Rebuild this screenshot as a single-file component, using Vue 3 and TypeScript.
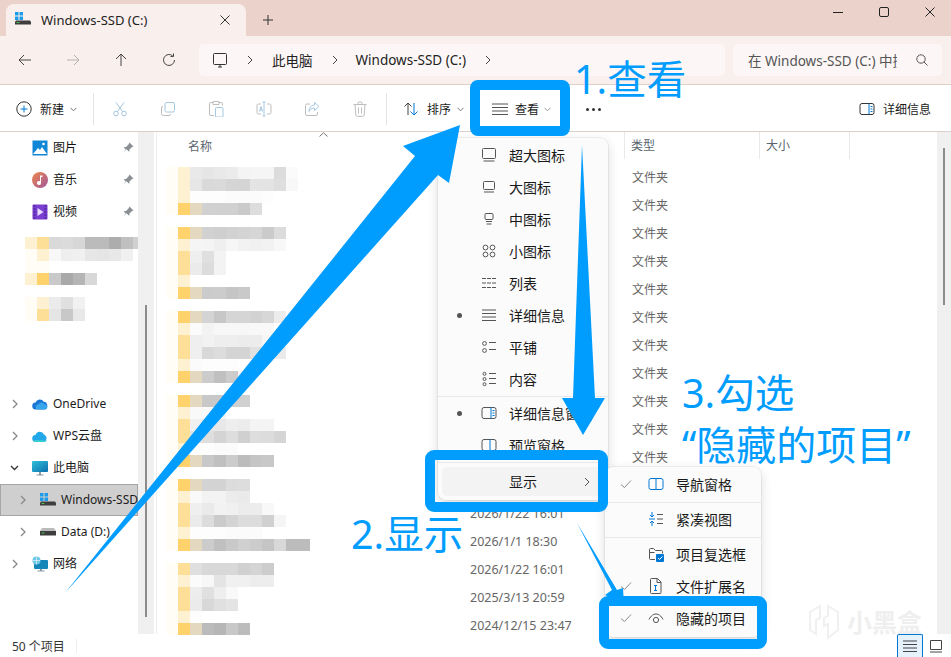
<script setup lang="ts">
interface Ico { d: string; b?: string; f?: string }
interface Item extends Ico { label: string; dot?: boolean; check?: boolean; sepAfter?: boolean }

const paneOuter = 'M3 2.5h10a2 2 0 0 1 2 2v7a2 2 0 0 1-2 2H3a2 2 0 0 1-2-2v-7a2 2 0 0 1 2-2z'
const circle = (x: number, y: number, r: number) =>
  `M${x - r} ${y}a${r} ${r} 0 1 0 ${2 * r} 0a${r} ${r} 0 1 0 ${-2 * r} 0z`

const menu: Item[] = [
  { label: '超大图标', d: 'M2.5 1.5h11a1 1 0 0 1 1 1v8a1 1 0 0 1-1 1h-11a1 1 0 0 1-1-1v-8a1 1 0 0 1 1-1zM2.5 14h11' },
  { label: '大图标', d: 'M3.5 2.5h9a1 1 0 0 1 1 1v6a1 1 0 0 1-1 1h-9a1 1 0 0 1-1-1v-6a1 1 0 0 1 1-1zM3 13h10' },
  { label: '中图标', d: 'M5 2.5h6a1 1 0 0 1 1 1v4a1 1 0 0 1-1 1H5a1 1 0 0 1-1-1v-4a1 1 0 0 1 1-1zM5 10.5h6M5.5 13h5' },
  { label: '小图标', d: circle(4.5, 4.5, 2.4) + circle(11.5, 4.5, 2.4) + circle(4.5, 11.5, 2.4) + circle(11.5, 11.5, 2.4) },
  { label: '列表', d: 'M1 3.5h4M1 8h4M1 12.5h4M6 3.5h4M6 8h4M6 12.5h4M11 3.5h4M11 8h4M11 12.5h4' },
  { label: '详细信息', dot: true, d: 'M1 3h14M1 6.5h14M1 10h14M1 13.5h14' },
  { label: '平铺', d: circle(3.5, 4.5, 1.9) + circle(3.5, 11.5, 1.9) + 'M8 3.5h7M8 10.5h7' },
  { label: '内容', sepAfter: true, d: circle(3.5, 2.8, 1.5) + circle(3.5, 8, 1.5) + circle(3.5, 13.2, 1.5) + 'M8 2.5h7M8 7.5h7M8 12.5h7' },
  { label: '详细信息窗格', dot: true, d: paneOuter, b: 'M10 2.5v11M11.5 5.5h2M11.5 8h2M11.5 10.5h2' },
  { label: '预览窗格', sepAfter: true, d: paneOuter, b: 'M9 2.5v11' },
]

const sub: Item[] = [
  { label: '导航窗格', check: true, sepAfter: true, d: '', b: paneOuter + 'M8 2.5v11' },
  { label: '紧凑视图', sepAfter: true, d: 'M9 3.5h6M9 8h6M9 12.5h6', b: 'M4 1v5M2 4l2 2 2-2M1 8h6M4 15v-5M2 12l2-2 2 2' },
  { label: '项目复选框', d: 'M7 13.5H2.5a1 1 0 0 1-1-1v-9a1 1 0 0 1 1-1h3l2 2h6a1 1 0 0 1 1 1v2M1.5 6.5h5', f: 'M9 8h6a1 1 0 0 1 1 1v6a1 1 0 0 1-1 1H9a1 1 0 0 1-1-1V9a1 1 0 0 1 1-1z' },
  { label: '文件扩展名', check: true, d: 'M3.5 .5h6l3.500 3.500V14.500a1 1 0 0 1-1 1h-8.500a1 1 0 0 1-1-1V1.500a1 1 0 0 1 1-1zM9 .5v4h4', b: 'M6 7.500h3M7.500 7.500v5M6 12.500h3' },
  { label: '隐藏的项目', check: true, d: 'M1 9.500C3 5.500 5.500 4 8 4s5 1.500 7 5.500' + circle(8, 10, 2.6) },
]

const tools: Ico[] = [
  { d: '', b: 'M4 1.500l6.500 9M12 1.500l-6.500 9' + circle(4, 12.500, 2.300) + circle(12, 12.500, 2.300) },
  { d: 'M3 5.500a1.500 1.500 0 0 0-1.500 1.500v5.500a2 2 0 0 0 2 2H9a1.500 1.500 0 0 0 1.500-1.500', b: 'M6.500 1.500h6.500a1.500 1.500 0 0 1 1.500 1.500v6.500a1.500 1.500 0 0 1-1.500 1.500H6.500a1.500 1.500 0 0 1-1.500-1.500V3a1.500 1.500 0 0 1 1.500-1.500z' },
  { d: 'M6 14.500H3a1.500 1.500 0 0 1-1.500-1.500V3A1.500 1.500 0 0 1 3 1.500h2M11 1.500h2A1.500 1.500 0 0 1 14.500 3v1.500M5 .5h6v3H5z', b: 'M8.500 6.500H14a1 1 0 0 1 1 1V15a1 1 0 0 1-1 1H8.500a1 1 0 0 1-1-1V7.500a1 1 0 0 1 1-1z' },
  { d: 'M5 3H2.500a1.500 1.500 0 0 0-1.500 1.500v7A1.500 1.500 0 0 0 2.500 13H5M11 3h2.500A1.500 1.500 0 0 1 15 4.500v7a1.500 1.500 0 0 1-1.500 1.500H11', b: 'M8 1v14M6.500 1h3M6.500 15h3M3.500 10.500L5 5.500l1.500 5M4 9h2' },
  { d: 'M6 3H3a1.500 1.500 0 0 0-1.500 1.500V13A1.500 1.500 0 0 0 3 14.500h9a1.500 1.500 0 0 0 1.500-1.500v-2', b: 'M10.500 1.500l4.500 4-4.500 4V7C8 7 6 8 5 10.500 5 6.500 7 4.200 10.500 4z' },
  { d: 'M1.500 3.500h13M6 3.500V2a1 1 0 0 1 1-1h2a1 1 0 0 1 1 1v1.500M3 3.500l.8 10.500a1.500 1.500 0 0 0 1.500 1.300h5.400a1.500 1.500 0 0 0 1.500-1.300L13 3.500M6.500 6.500v6M9.500 6.500v6' },
]

const mosaicNames = [
  'p c e9 e6 e9 eb f4 f5 f5 dc fb', 'p c e6 d9 da d5 d4 e4 e3 de f8', 'p c fd fd fd fb fb fb fd',
  'p y t d1 d0 d0 ca dd', '', 'p y t d1 cf d2 d4 d6 cb dc', 'p c f5 f4 ef f6 f2 f0 f2 f8',
  'p o ef df f3', 'p o eb dc f3', 'p c', 'p y t cb cc c5 c9', '',
  'p y t d4 c7 d5 d5 d2 d7 ec', 'p c fb f3 f7 f7 f7 f8 f8', 'p o ef f2 ee ee ec ec f6',
  'p o ef d8 dc d4 d4 e0 e0 ea', 'p c fb fd fd fd', 'p y t cc c0 cc f5', '',
  'p y t c8 c8 d0 d0', 'p c f9 f9 f5', 'p o f0 e8 e8 ee ec f4 f4', 'p o e2 de d4 dd d0 dd dc d5',
  'p c fd fd fb fb', 'p y t c8 c0 cc bc c5 c8', '',
  'p y t d3 d3 dc dd', 'p c f9 f3 f3 ec ea', 'p o ef ea f2 f0 ec ec f8',
  'p o eb dc cb d4 dc dc d0 f5', 'p c fd fd fd fb fb fb', 'p y t cc c0 c9 d0 cc c5 d8 bc bc', '',
  'p o df d8 d8 d8 d0 d4 cc', 'p c fb f7 e4 f0 f0 ed ed', 'p o ed e0 ee f9', 'p o eb d8 e0 e4',
  'p c fd', 'p y t bb b6 c8 bc',
]
const mosaicSide = [
  'c o d9 db d7 bb bb ad c0 d0', 'p c f8 ee f0 e7 e5 e8 f0', 'p p', 'c y c9 a9 b5 d8', '',
  'p c eb e0 f1', 'p o e5 c8 e8',
]
const tokens: Record<string, string> = {
  p: '#fffdf6', c: '#fef1d2', y: '#ffd26c', o: '#fedf98', t: '#e4d9c0',
}
const toCells = (rows: string[]) =>
  rows.map((r) => (r ? r.split(' ').map((k) => tokens[k] ?? `#${k}${k}${k}`) : []))
const nameCells = toCells(mosaicNames)
const sideCells = toCells(mosaicSide)

const dates = [...Array(12).fill(''), '2026/1/22 16:01', '2026/1/1 18:30', '2026/1/22 16:01', '2025/3/13 20:59', '2024/12/15 23:47']
const types = Array(11).fill('文件夹')
</script>

<template>
  <div class="win">
    <!-- title bar -->
    <div class="title">
      <div class="tab">
        <svg class="drive" width="16" height="14" viewBox="0 0 16 14">
          <path fill="#1e9be8" d="M0 0h3.500v3.500H0zM4.500 0H8v3.500H4.500zM0 4.500h3.500V8H0zM4.500 4.500H8V8H4.500z" />
          <path fill="#3d3d3d" d="M0 10l1-1.500h14l1 1.500v2.500H0z" />
          <path fill="#4fc04f" d="M1.500 10h3v1h-3z" />
        </svg>
        <span class="tab-text">Windows-SSD (C:)</span>
        <svg class="tab-x" width="10" height="10" viewBox="0 0 10 10"><path d="M.5.5l9 9M9.500.5l-9 9" stroke="#333" fill="none" /></svg>
      </div>
      <svg class="plus" width="10" height="10" viewBox="0 0 10 10"><path d="M5 0v10M0 5h10" stroke="#333" fill="none" /></svg>
      <div class="wctl">
        <svg width="10" height="10" viewBox="0 0 10 10"><path d="M0 5.500h10" stroke="#222" /></svg>
        <svg width="10" height="10" viewBox="0 0 10 10"><rect x=".5" y=".5" width="9" height="9" rx="1.500" stroke="#222" fill="none" /></svg>
        <svg width="10" height="10" viewBox="0 0 10 10"><path d="M.5.5l9 9M9.500.5l-9 9" stroke="#222" fill="none" /></svg>
      </div>
    </div>

    <!-- address bar -->
    <div class="addr">
      <svg class="nav" width="16" height="16" viewBox="0 0 16 16"><path d="M14 8H2M7 3L2 8l5 5" stroke="#444" fill="none" /></svg>
      <svg class="nav" width="16" height="16" viewBox="0 0 16 16"><path d="M2 8h12M9 3l5 5-5 5" stroke="#b5b0ae" fill="none" /></svg>
      <svg class="nav" width="16" height="16" viewBox="0 0 16 16"><path d="M8 14V2M3 7l5-5 5 5" stroke="#444" fill="none" /></svg>
      <svg class="nav" width="16" height="16" viewBox="0 0 16 16"><path d="M13.500 8A5.500 5.500 0 1 1 11.800 4M12.500 1.500V4.500H9.500" stroke="#444" fill="none" /></svg>
      <div class="crumbs">
        <svg class="pc" width="16" height="16" viewBox="0 0 16 16"><path d="M2.500 1.500h11a1 1 0 0 1 1 1v9a1 1 0 0 1-1 1h-11a1 1 0 0 1-1-1v-9a1 1 0 0 1 1-1zM6 15h4M8 12.500V15" stroke="#333" fill="none" /></svg>
        <svg class="cr" width="6" height="10" viewBox="0 0 6 10"><path d="M1 1l4 4-4 4" stroke="#444" fill="none" /></svg>
        <span class="c1">此电脑</span>
        <svg class="cr" width="6" height="10" viewBox="0 0 6 10"><path d="M1 1l4 4-4 4" stroke="#444" fill="none" /></svg>
        <span class="c2">Windows-SSD (C:)</span>
        <svg class="cr" width="6" height="10" viewBox="0 0 6 10"><path d="M1 1l4 4-4 4" stroke="#444" fill="none" /></svg>
      </div>
      <div class="search">
        <span class="s-text">在 Windows-SSD (C:) 中搜</span>
        <svg width="12" height="12" viewBox="0 0 12 12"><path d="M5 .8a4.200 4.200 0 1 0 0 8.400a4.200 4.200 0 1 0 0-8.400zM8 8l3.500 3.500" stroke="#555" fill="none" /></svg>
      </div>
    </div>

    <!-- toolbar -->
    <div class="tools">
      <svg width="16" height="16" viewBox="0 0 16 16"><circle cx="8" cy="8" r="7.200" stroke="#333" fill="none" /><path d="M8 4.500v7M4.500 8h7" stroke="#0078d4" /></svg>
      <span class="t-label t-new">新建</span>
      <svg class="t-chev" width="7" height="5" viewBox="0 0 7 5"><path d="M.5.8l3 3 3-3" stroke="#777" fill="none" /></svg>
      <i class="t-sep s1"></i>
      <span v-for="(t, i) in tools" :key="i" class="t-btn">
        <svg width="16" height="16" viewBox="0 0 16 16">
          <path :d="t.d" stroke="#bdbdbd" fill="none" />
          <path v-if="t.b" :d="t.b" stroke="#a5c8e0" fill="none" />
        </svg>
      </span>
      <i class="t-sep s2"></i>
      <svg class="t-sort" width="16" height="16" viewBox="0 0 16 16"><path d="M5 14V2M1.500 5.500L5 2l3.500 3.500" stroke="#444" fill="none" /><path d="M11 2v12M7.500 10.500L11 14l3.500-3.500" stroke="#0078d4" fill="none" /></svg>
      <span class="t-label t-sorttxt">排序</span>
      <svg class="t-chev" width="7" height="5" viewBox="0 0 7 5"><path d="M.5.8l3 3 3-3" stroke="#777" fill="none" /></svg>
      <svg class="t-view" width="16" height="16" viewBox="0 0 16 16"><path d="M0 3h16M0 6.500h16M0 10h16M0 13.500h16" stroke="#555" /></svg>
      <span class="t-label t-viewtxt">查看</span>
      <svg class="t-chev v" width="7" height="5" viewBox="0 0 7 5"><path d="M.5.8l3 3 3-3" stroke="#999" fill="none" /></svg>
      <span class="dots"><i></i><i></i><i></i></span>
      <svg class="t-det" width="16" height="16" viewBox="0 0 16 16"><path :d="paneOuter" stroke="#333" fill="none" /><path d="M10 2.500v11M11.500 5.500h2M11.500 8h2M11.500 10.500h2" stroke="#0078d4" fill="none" /></svg>
      <span class="t-label t-dettxt">详细信息</span>
    </div>

    <!-- body -->
    <div class="body">
      <div class="side">
        <div class="row q">
          <svg width="16" height="16" viewBox="0 0 16 16"><rect width="15" height="15" x=".5" y=".5" fill="#0f86d6" /><path d="M1 14l5-6 2 2 2-3 5 7z" fill="#fff" /><circle cx="11.500" cy="4" r="1.300" fill="#fff" /></svg>
          <span>图片</span>
          <svg class="pin" width="12" height="12" viewBox="0 0 12 12"><path fill="#8a8f94" d="M7.500.5l4 4-1.500.5-2.500 2.500-.3 2.300-1-.8-1.700-1.700L1 11l2.700-3.500-1.200-1.300-.8-1 2.300-.3L6.500 2.500z" /></svg>
        </div>
        <div class="row q">
          <svg width="16" height="16" viewBox="0 0 16 16"><defs><linearGradient id="mg" x1="0" y1="0" x2="1" y2="1"><stop offset="0" stop-color="#f0884e" /><stop offset="1" stop-color="#a0569c" /></linearGradient></defs><circle cx="8" cy="8" r="8" fill="url(#mg)" /><path d="M8 3.500h2.500v1.500H9v6a2 2 0 1 1-1-1.700z" fill="#fff" /></svg>
          <span>音乐</span>
          <svg class="pin" width="12" height="12" viewBox="0 0 12 12"><path fill="#8a8f94" d="M7.500.5l4 4-1.500.5-2.500 2.500-.3 2.300-1-.8-1.700-1.700L1 11l2.700-3.500-1.200-1.300-.8-1 2.300-.3L6.500 2.500z" /></svg>
        </div>
        <div class="row q">
          <svg width="16" height="16" viewBox="0 0 16 16"><rect x=".5" y=".5" width="15" height="15" rx="1" fill="#7a3fd0" /><path d="M5.500 4l6 4-6 4z" fill="#e9dcff" /><path d="M1.500 2h2M1.500 5h2M1.500 8h2M1.500 11h2M1.500 14h2M12.500 2h2M12.500 5h2M12.500 8h2M12.500 11h2M12.500 14h2" stroke="#3d1a80" /></svg>
          <span>视频</span>
          <svg class="pin" width="12" height="12" viewBox="0 0 12 12"><path fill="#8a8f94" d="M7.500.5l4 4-1.500.5-2.500 2.500-.3 2.300-1-.8-1.700-1.700L1 11l2.700-3.500-1.200-1.300-.8-1 2.300-.3L6.500 2.500z" /></svg>
        </div>

        <div class="side-mosaic">
          <div v-for="(r, i) in sideCells" :key="i" class="m-row">
            <i v-for="(c, j) in r" :key="j" :style="{ background: c }"></i>
          </div>
        </div>

        <div class="row top">
          <svg class="chev" width="6" height="10" viewBox="0 0 6 10"><path d="M1 1l4 4-4 4" stroke="#888" stroke-width="1.300" fill="none" /></svg>
          <svg width="16" height="12" viewBox="0 0 16 12"><path d="M4 11.500a3.500 3.500 0 0 1-.5-7 4.500 4.500 0 0 1 8.200-.8A4 4 0 0 1 12.500 11.500z" fill="#1a76d2" /><path d="M6 11.500a2.500 2.500 0 0 1 .5-5 3.500 3.500 0 0 1 6.200 0 2.500 2.500 0 0 1 .3 5z" fill="#38a5ec" /></svg>
          <span>OneDrive</span>
        </div>
        <div class="row">
          <svg class="chev" width="6" height="10" viewBox="0 0 6 10"><path d="M1 1l4 4-4 4" stroke="#888" stroke-width="1.300" fill="none" /></svg>
          <svg width="16" height="14" viewBox="0 0 16 14"><path d="M4 13a3.500 3.500 0 0 1-.5-7 4.500 4.500 0 0 1 8.500-.5A4 4 0 0 1 12 13z" fill="#22a7e8" /><path d="M1.500 11a3 3 0 0 0 2.500 2h8a4 4 0 0 0 3-1.500z" fill="#3bd0d0" /></svg>
          <span>WPS云盘</span>
        </div>
        <div class="row">
          <svg class="chev" width="9" height="6" viewBox="0 0 9 6"><path d="M1 1l3.500 3.500L8 1" stroke="#333" stroke-width="1.300" fill="none" /></svg>
          <svg width="16" height="16" viewBox="0 0 16 16"><defs><linearGradient id="pcg" x1="0" y1="0" x2="1" y2="1"><stop offset="0" stop-color="#2fc0d8" /><stop offset="1" stop-color="#0d6fb0" /></linearGradient></defs><rect y="1" width="16" height="11" rx="1" fill="url(#pcg)" /><path d="M7 12h2v2.500H7zM4.500 14.500h7v1h-7z" fill="#8d99a3" /></svg>
          <span>此电脑</span>
        </div>
        <div class="row sub sel">
          <svg class="chev" width="6" height="10" viewBox="0 0 6 10"><path d="M1 1l4 4-4 4" stroke="#888" stroke-width="1.300" fill="none" /></svg>
          <svg width="16" height="14" viewBox="0 0 16 14">
            <path fill="#1e9be8" d="M0 0h3.500v3.500H0zM4.500 0H8v3.500H4.500zM0 4.500h3.500V8H0zM4.500 4.500H8V8H4.500z" />
            <path fill="#3d3d3d" d="M0 10l1-1.500h14l1 1.500v2.500H0z" />
            <path fill="#4fc04f" d="M1.500 10h3v1h-3z" />
          </svg>
          <span>Windows-SSD (C:)</span>
        </div>
        <div class="row sub">
          <svg class="chev" width="6" height="10" viewBox="0 0 6 10"><path d="M1 1l4 4-4 4" stroke="#888" stroke-width="1.300" fill="none" /></svg>
          <svg width="16" height="8" viewBox="0 0 16 8"><path fill="#bbb" d="M2 0h12l2 3H0z" /><path fill="#3d3d3d" d="M0 3h16v4.500H0z" /><path fill="#4fc04f" d="M1.500 4.500h3v1h-3z" /></svg>
          <span>Data (D:)</span>
        </div>
        <div class="row">
          <svg class="chev" width="6" height="10" viewBox="0 0 6 10"><path d="M1 1l4 4-4 4" stroke="#888" stroke-width="1.300" fill="none" /></svg>
          <svg width="16" height="16" viewBox="0 0 16 16"><rect x="2" y="4" width="14" height="9" rx="1" fill="#1487b8" /><path d="M8 13h2v1.500H8zM5.500 14.500h7v1h-7z" fill="#8d99a3" /><circle cx="4.500" cy="4.500" r="4" fill="#6fc7e8" /><path d="M1 4.500h7M4.500 .5v8" stroke="#e4f5fb" stroke-width=".7" /></svg>
          <span>网络</span>
        </div>
      </div>

      <div class="sbar"><i class="thumb-l"></i></div>

      <div class="pane">
        <div class="head">
          <span class="h-name">名称</span>
          <svg class="h-up" width="9" height="5" viewBox="0 0 9 5"><path d="M.5 4.500L4.500.8l4 3.700" stroke="#777" fill="none" /></svg>
          <span class="h-cell h-date"></span>
          <span class="h-cell h-type">类型</span>
          <span class="h-cell h-size">大小</span>
        </div>
        <div class="list">
          <div class="col-name">
            <div v-for="(r, i) in nameCells" :key="i" class="m-row">
              <i v-for="(c, j) in r" :key="j" :style="{ background: c }"></i>
            </div>
          </div>
          <div class="col-date">
            <div v-for="(d, i) in dates" :key="i" class="cell">{{ d }}</div>
          </div>
          <div class="col-type">
            <div v-for="(t, i) in types" :key="i" class="cell">{{ t }}</div>
          </div>
        </div>
      </div>

      <div class="vbar"><i class="thumb-r"></i></div>
    </div>

    <!-- status bar -->
    <div class="status">
      <span class="count">50 个项目</span>
      <i class="st-sep"></i>
      <span class="grow"></span>
      <span class="vbtn on"><svg width="16" height="14" viewBox="0 0 16 14"><path d="M1 2h14M1 5.500h14M1 9h14M1 12.500h14" stroke="#444" /></svg></span>
      <span class="vbtn"><svg width="14" height="14" viewBox="0 0 14 14"><path d="M1.500 1.500h11v9h-11zM1 13h12" stroke="#444" fill="none" /></svg></span>
    </div>

    <!-- watermark -->
    <div class="wm">
      <svg width="32" height="36" viewBox="0 0 32 36"><path d="M12 2L2 8v18l6 4V16l4-2zM20 2l10 6v18l-10 8V20l-4 2v-8l4-2z" fill="none" stroke="#f0f0f0" stroke-width="2" /></svg>
      <span>小黑盒</span>
    </div>

    <!-- view menu -->
    <div class="menu">
      <template v-for="m in menu" :key="m.label">
        <div class="mi">
          <span class="mark"><i v-if="m.dot" class="dot"></i></span>
          <svg width="16" height="16" viewBox="0 0 16 16">
            <path :d="m.d" stroke="#555" fill="none" />
            <path v-if="m.b" :d="m.b" stroke="#0078d4" fill="none" />
          </svg>
          <span class="ml">{{ m.label }}</span>
        </div>
        <div v-if="m.sepAfter" class="msep"></div>
      </template>
      <div class="mi hot">
        <span class="mark"></span>
        <span class="ic-gap"></span>
        <span class="ml">显示</span>
        <svg class="mchev" width="6" height="10" viewBox="0 0 6 10"><path d="M1 1l4 4-4 4" stroke="#555" fill="none" /></svg>
      </div>
    </div>

    <!-- show submenu -->
    <div class="submenu">
      <template v-for="m in sub" :key="m.label">
        <div class="mi si">
          <span class="mark">
            <svg v-if="m.check" width="12" height="10" viewBox="0 0 12 10"><path d="M1 5.500l3.500 3L11 1.500" stroke="#8a8a8a" fill="none" /></svg>
          </span>
          <svg width="16" height="16" viewBox="0 0 16 16">
            <path :d="m.d" stroke="#555" fill="none" />
            <path v-if="m.b" :d="m.b" stroke="#0078d4" fill="none" />
            <template v-if="m.f">
              <path :d="m.f" fill="#0078d4" />
              <path d="M10 12l1.500 1.500 3-3" stroke="#fff" fill="none" />
            </template>
          </svg>
          <span class="ml">{{ m.label }}</span>
        </div>
        <div v-if="m.sepAfter" class="msep wide"></div>
      </template>
    </div>

    <!-- annotations -->
    <svg class="arrows" width="951" height="657" viewBox="0 0 951 657">
      <polygon points="65,593 415,156 403,146 460,125 449,183 438,175" />
      <polygon points="582,145 595,398 605,398 583,435 562,398 573,398" />
      <polygon points="577,523 612,590 605,595 624,605 623,588 617,590" />
    </svg>
    <div class="box b1"></div>
    <div class="box b2"></div>
    <div class="box b3"></div>
    <div class="note n1">1.查看</div>
    <div class="note n2">2.显示</div>
    <div class="note n3">3.勾选</div>
    <div class="note n4">“隐藏的项目”</div>
  </div>
</template>

<style scoped>
.win {
  position: relative;
  width: 951px;
  height: 657px;
  overflow: hidden;
  display: flex;
  flex-direction: column;
  background: #fff;
  color: #1c1c1c;
  font-family: "Noto Sans", "Noto Sans CJK SC", sans-serif;
  font-size: 12px;
}
svg { flex: none; display: block; }

/* title */
.title { height: 36px; flex: none; display: flex; align-items: flex-end; background: #ebd3cb; padding-left: 6px; }
.tab { width: 240px; height: 32px; box-sizing: border-box; display: flex; align-items: center; background: #f9f0ee; border-radius: 8px 8px 0 0; padding-left: 9px; }
.drive { margin-top: -3px; }
.tab-text { margin-left: 10px; font-size: 13px; flex: 1; color: #222; }
.tab-x { margin-right: 16px; }
.plus { margin: 0 0 11px 17px; }
.wctl { margin-left: auto; display: flex; gap: 36px; padding: 0 16px 19px 0; }

/* address */
.addr { height: 49px; flex: none; box-sizing: border-box; display: flex; align-items: center; background: #f9f0ee; border-bottom: 1px solid #e0cfc9; padding: 0 9px 1px 17px; }
.nav { margin-right: 32px; }
.nav:nth-child(4) { margin-right: 22px; }
.crumbs { width: 526px; height: 32px; display: flex; align-items: center; background: #fcf7f6; border-radius: 5px; font-size: 13.5px; color: #222; padding-left: 13px; box-sizing: border-box; }
.cr { margin-left: 19px; }
.c1 { margin-left: 19px; }
.c2 { margin-left: 18px; }
.search { width: 209px; height: 32px; margin-left: 8px; box-sizing: border-box; display: flex; align-items: center; justify-content: space-between; background: #fcf7f6; border-radius: 5px; padding: 0 14px 0 15px; color: #555; font-size: 13.5px; }
.s-text { width: 149px; white-space: nowrap; overflow: hidden; }

/* toolbar */
.tools { height: 47px; flex: none; box-sizing: border-box; display: flex; align-items: center; border-bottom: 1px solid #dcd0cc; padding: 2px 0 0 16px; background: #fff; }
.t-label { white-space: nowrap; width: 24px; }
.t-new { margin-left: 8px; }
.t-chev { margin-left: 6px; }
.t-chev.v { margin-left: 5px; }
.t-sep { width: 1px; height: 32px; background: #e8e4e2; }
.s1 { margin-left: 16px; margin-right: 2px; }
.t-btn { width: 48px; display: flex; justify-content: center; }
.s2 { margin-left: 2px; }
.t-sort { margin-left: 16px; }
.t-sorttxt { margin-left: 8px; }
.t-view { margin-left: 28px; }
.t-viewtxt { margin-left: 7px; }
.dots { margin-left: 35px; display: flex; gap: 3px; }
.dots i { width: 3px; height: 3px; border-radius: 50%; background: #333; }
.t-det { margin-left: 258px; }
.t-dettxt { margin-left: 8px; width: 48px; }

/* body */
.body { flex: 1; display: flex; min-height: 0; }
.side { width: 138px; flex: none; overflow: hidden; }
.row { height: 32px; display: flex; align-items: center; white-space: nowrap; padding-left: 32px; position: relative; }
.row > span { margin: -2px 0 0 5px; }
.q .pin { margin-left: auto; margin-right: 4px; }
.q span { color: #111; }
.chev { position: absolute; left: 12px; top: 11px; }
.chev[width="9"] { left: 10px; top: 13px; }
.sub { padding-left: 40px; }
.sub .chev { left: 20px; }
.sel { background: #cfcfcf; box-shadow: inset 0 0 0 1px #a6a6a6; }
.side-mosaic { margin: 9px 0 0 25px; height: 84px; }
.m-row { display: flex; height: 12px; }
.m-row i { width: 12px; height: 12px; flex: none; }
.top { margin-top: 67px; }
.sbar { width: 16px; flex: none; background: #f0f0f0; display: flex; justify-content: center; }
.thumb-l { width: 2px; height: 312px; margin-top: 173px; background: #8c8c8c; }
.vbar { width: 14px; flex: none; background: #f0f0f0; display: flex; justify-content: center; }
.thumb-r { width: 2px; height: 157px; margin-top: 16px; background: #8c8c8c; }

.pane { flex: 1; min-width: 0; margin-left: 2px; border-left: 1px solid #efefef; }
.head { height: 28px; display: flex; position: relative; color: #5a6470; }
.h-name { width: 305px; padding: 5px 0 0 31px; box-sizing: border-box; }
.h-up { position: absolute; left: 162px; top: 0; }
.h-cell { height: 27px; box-sizing: border-box; padding: 4px 0 0 6px; border-right: 1px solid #e9e9e9; }
.h-date { width: 163px; }
.h-type { width: 135px; }
.h-size { width: 90px; padding-left: 6px; }
.list { display: flex; position: relative; height: 474px; }
.col-name { width: 305px; margin-left: 0; padding-top: 7px; box-sizing: border-box; padding-left: 9px; }
.cell { height: 28px; line-height: 28px; color: #666; white-space: nowrap; }
.col-date { width: 163px; box-sizing: border-box; padding: 4px 0 0 8px; font-size: 12.5px; }
.col-type { padding: 4px 0 0 7px; }

/* status */
.status { height: 23px; flex: none; display: flex; align-items: flex-end; padding-left: 12px; position: relative; color: #333; }
.count { align-self: center; width: 64px; }
.st-sep { width: 1px; height: 14px; background: #eee; align-self: center; }
.grow { flex: 1; }
.vbtn { width: 26px; height: 23px; box-sizing: border-box; display: flex; align-items: center; justify-content: center; }
.vbtn.on { background: #e5f1fb; border: 1px solid #0078d4; border-bottom: 0; border-radius: 2px 2px 0 0; }
.vbtn:last-child { width: 14px; margin-left: 6px; margin-right: 8px; }

/* watermark */
.wm { position: absolute; left: 808px; top: 604px; display: flex; align-items: center; gap: 7px; color: #efefef; font-size: 25px; font-weight: 700; line-height: 32px; }

/* menus */
.menu, .submenu { position: absolute; box-sizing: border-box; background: #fbfbfb; border-radius: 8px; box-shadow: 0 4px 12px rgba(0, 0, 0, .14), 0 0 0 1px rgba(0, 0, 0, .05); font-size: 14px; }
.menu { left: 438px; top: 138px; width: 170px; height: 362px; padding: 1px 4px 4px; }
.submenu { left: 605px; top: 467px; width: 156px; height: 170px; padding: 1px 0 0; }
.mi { height: 32px; display: flex; align-items: center; white-space: nowrap; overflow: hidden; color: #1a1a1a; border-radius: 5px; }
.mark { width: 39px; height: 16px; flex: none; display: flex; align-items: center; justify-content: center; padding-right: 4px; box-sizing: border-box; }
.dot { width: 5px; height: 5px; border-radius: 50%; background: #555; }
.ml { margin-left: 12px; }
.ic-gap { width: 16px; flex: none; }
.msep { height: 1px; background: #e8e8e8; margin: 1px -4px 0; }
.msep.wide { margin: 2px 0 0; }
.hot { background: #f3f3f3; height: 29px; margin-top: 4px; position: relative; }
.hot .ml { margin-top: -2px; }
.mchev { position: absolute; right: 14px; top: 10px; }
.si .mark { width: 43px; padding: 0 8px 0 7px; }

/* annotations */
.arrows { position: absolute; left: 0; top: 0; pointer-events: none; }
.arrows polygon { fill: #009dff; }
.box { position: absolute; box-sizing: border-box; border: 10px solid #009dff; border-radius: 9px; }
.b1 { left: 470px; top: 80px; width: 100px; height: 56px; border-radius: 8px; }
.b2 { left: 425px; top: 450px; width: 183px; height: 62px; }
.b3 { left: 599px; top: 596px; width: 168px; height: 53px; }
.note { position: absolute; color: #009dff; white-space: nowrap; line-height: 1; font-size: 39.5px; }
.n1 { left: 574px; top: 60px; }
.n2 { left: 351px; top: 515px; }
.n3 { left: 682px; top: 374px; }
.n4 { left: 682px; top: 425px; font-size: 40px; }
</style>
